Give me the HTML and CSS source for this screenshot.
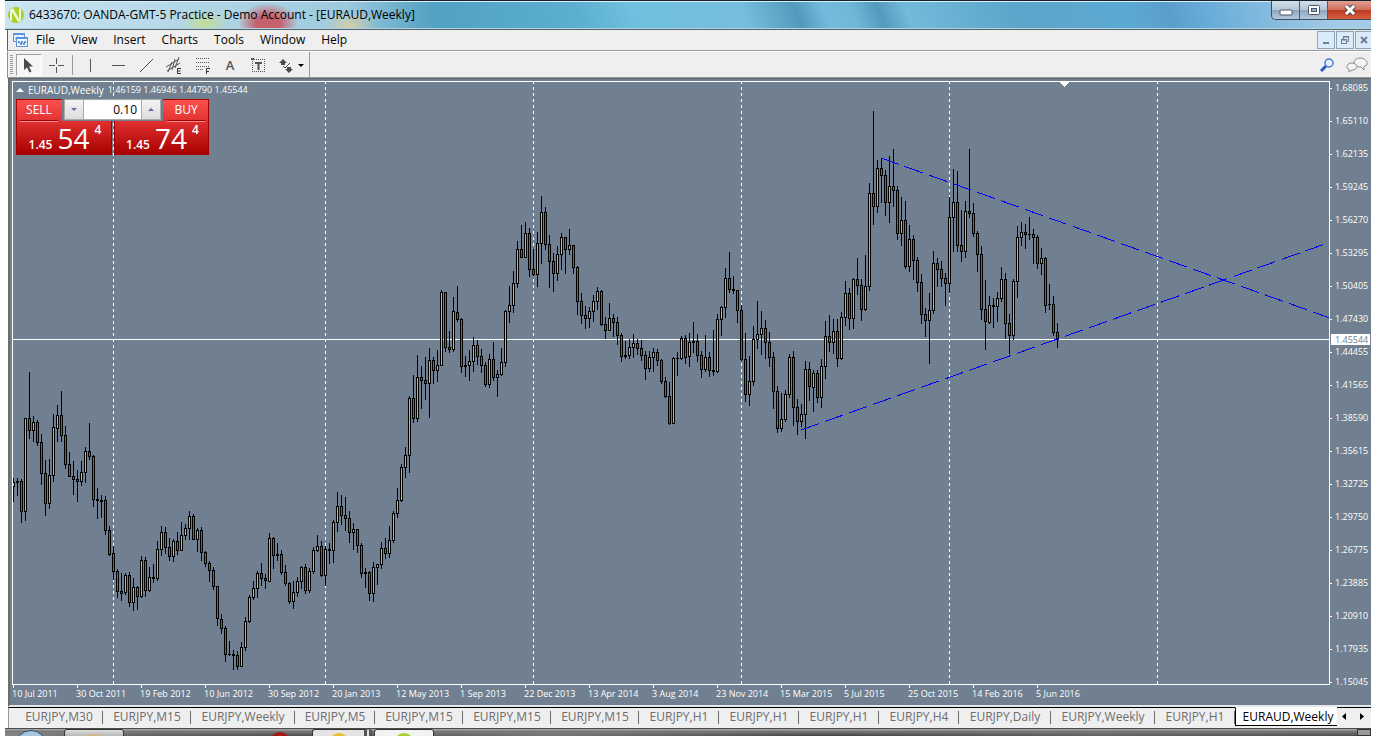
FILE: index.html
```
<!DOCTYPE html>
<html lang="en">
<head>
  <meta charset="UTF-8" />
  <meta name="viewport" content="width=device-width, initial-scale=1.0"/>
  <title>EURAUD,Weekly</title>
  <link rel="stylesheet" href="styles.css">
</head>
<body>

  <div class="window">
    <header class="titlebar">
      <svg class="logo" width="16" height="16" viewBox="0 0 16 16">
        <circle cx="8" cy="8" r="8" fill="#a9cf2d"/>
        <path d="M2 3 L5 1 L11 12 V1 L13 2 V14 L10 15 L4 5 V14 L2 13 Z" fill="#eef6d8"/>
      </svg>
      <h1>6433670: OANDA-GMT-5 Practice - Demo Account - [EURAUD,Weekly]</h1>
      <div class="window-buttons">
        <button aria-label="Minimize"><svg width="14" height="12"><rect x="1" y="6" width="12" height="5" rx="1" fill="#fff" stroke="#4a5565"/></svg></button>
        <button aria-label="Maximize"><svg width="14" height="12"><rect x="1.500" y="1.500" width="11" height="9" rx="1" fill="#fff" stroke="#4a5565"/><rect x="4.500" y="4.500" width="5" height="3" fill="#8fb0cf" stroke="#4a5565"/></svg></button>
        <button class="close" aria-label="Close"><svg width="14" height="12"><path d="M3 2 L11 10 M11 2 L3 10" stroke="#4b4650" stroke-width="5"/><path d="M3 2 L11 10 M11 2 L3 10" stroke="#fff" stroke-width="3"/></svg></button>
      </div>
    </header>

    <nav class="menubar">
      <svg class="chart-icon" width="15" height="14" viewBox="0 0 15 14">
        <rect x="0.500" y="0.500" width="11" height="8" fill="#e6f1fd" stroke="#5b93dd"/>
        <path d="M0 1.500 H12" stroke="#5b93dd"/>
        <path d="M2 6 L4 4 L6 5" stroke="#5b93dd" fill="none"/>
        <rect x="3.500" y="4.500" width="11" height="9" fill="#f2f8ff" stroke="#5b93dd"/>
        <path d="M3 5.500 H15" stroke="#5b93dd"/>
        <path d="M5 10 L6 8 L8 12 L9 8 L11 12 L12 8 L13 10" stroke="#3d7dd0" fill="none"/>
      </svg>
      <a href="#">File</a>
      <a href="#">View</a>
      <a href="#">Insert</a>
      <a href="#">Charts</a>
      <a href="#">Tools</a>
      <a href="#">Window</a>
      <a href="#">Help</a>
      <div class="mdi-buttons">
        <button aria-label="Minimize chart"><svg width="10" height="10"><rect x="2" y="7" width="6" height="2" fill="#6e7f92"/></svg></button>
        <button aria-label="Restore chart"><svg width="10" height="10" fill="none" stroke="#6e7f92"><path d="M3 1.500 H9 M3.500 1 V4 M8.500 1 V6.500 H6"/><path d="M3 2 H9"/><rect x="1.500" y="4.500" width="5" height="4"/><path d="M1 5 H7"/></svg></button>
        <button aria-label="Close chart"><svg width="10" height="10"><path d="M2 2 L8 8 M8 2 L2 8" stroke="#6e7f92" stroke-width="2"/></svg></button>
      </div>
    </nav>

    <div class="toolbar">
      <span class="grip"></span>
      <button class="tool active" aria-label="Cursor"><svg width="20" height="20"><path d="M5 3 V15 L8 12.500 L10.500 17.500 L12.500 16.500 L10 11.500 H14 Z" fill="#4a4a4a"/></svg></button>
      <button class="tool" aria-label="Crosshair"><svg width="20" height="20" stroke="#555"><path d="M3 10.500 H9 M12 10.500 H18 M10.500 3 V9 M10.500 12 V18"/></svg></button>
      <span class="separator"></span>
      <button class="tool" aria-label="Vertical line"><svg width="20" height="20" stroke="#555"><path d="M10.500 4 V17"/></svg></button>
      <button class="tool" aria-label="Horizontal line"><svg width="20" height="20" stroke="#555"><path d="M4 10.500 H17"/></svg></button>
      <button class="tool" aria-label="Trendline"><svg width="20" height="20" stroke="#555"><path d="M4 17 L17 4"/></svg></button>
      <button class="tool" aria-label="Equidistant channel">
        <svg width="20" height="20" stroke="#555" fill="none"><path d="M2 12 L15 4 M3 16 L16 8 M4 17 L8 7 M8 15 L11 4 M11 13 L15 2"/><path d="M17 13.500 H13.500 V18.500 H17 M13 16 H16.500" stroke="#333"/></svg>
      </button>
      <button class="tool" aria-label="Fibonacci retracement">
        <svg width="20" height="20" stroke="#555" fill="none"><path d="M4 3.500 H18 M4 7.500 H18 M4 11.500 H18 M4 14.500 H12" stroke-dasharray="1 1"/><path d="M18 13.500 H14.500 V19 M14 16.500 H17" stroke="#333"/></svg>
      </button>
      <button class="tool letter" aria-label="Text">A</button>
      <button class="tool" aria-label="Text label">
        <svg width="20" height="20" stroke="#555" fill="none"><path d="M4.500 4 V17 M4 4.500 H17 M16.500 4 V17 M4 16.500 H17" stroke-dasharray="1 1"/><path d="M7 8 H14 M10.500 8 V15" stroke-width="2"/><path d="M3 4 H6" stroke-width="2"/></svg>
      </button>
      <button class="tool shapes" aria-label="Arrows">
        <svg width="28" height="20"><path d="M6 4 L10 8 H8 V10 H4 V8 H2 Z M12 18 L8 14 H10 V12 H14 V14 H16 Z" fill="#4a4a4a"/><path d="M6 11 L8 13 L13 8" stroke="#4a4a4a" fill="none"/><path d="M21 9 H27 L24 12 Z" fill="#000"/></svg>
      </button>
      <span class="separator end"></span>
      <div class="toolbar-right">
        <button aria-label="Search"><svg width="14" height="14" fill="none"><path d="M1 13 L6 8" stroke="#2457c5" stroke-width="3"/><circle cx="9" cy="5" r="4" fill="#eaf3ff" stroke="#3f78dc" stroke-width="1.500"/></svg></button>
        <button aria-label="Chat"><svg width="22" height="16" fill="#f4f4f4" stroke="#8a8a8a"><path d="M14 1 C22 1 23 9 18 9.500 L18 13 L15 10 C6 10 6 1 14 1 Z"/><path d="M6 6 C0 6 0 12 3 12.500 V15 L6 13 C13 13 12 6 6 6 Z"/></svg></button>
      </div>
    </div>

    <main class="chart">
      <div class="plot">
        <svg class="candles" id="candles" role="img" aria-label="EURAUD weekly candles"></svg>
        <p class="quote"><span class="up-arrow"></span><span class="symbol">EURAUD,Weekly</span>1.46159 1.46946 1.44790 1.45544</p>
        <form class="one-click">
          <button type="button" class="deal"><span class="side">SELL</span><span class="price">1.45 <b>54</b><sup>4</sup></span></button>
          <button type="button" class="deal buy"><span class="side">BUY</span><span class="price">1.45 <b>74</b><sup>4</sup></span></button>
          <div class="volume">
            <button type="button" aria-label="Less volume"><i class="down"></i></button>
            <input type="text" value="0.10" aria-label="Volume">
            <button type="button" aria-label="More volume"><i class="up"></i></button>
          </div>
        </form>
      </div>
      <div class="price-axis">
        <ul id="prices"></ul>
        <span class="last-price">1.45544</span>
      </div>
      <ol class="time-axis" id="dates"></ol>
    </main>

    <nav class="tabs">
      <a href="#">EURJPY,M30</a>
      <a href="#">EURJPY,M15</a>
      <a href="#" class="long">EURJPY,Weekly</a>
      <a href="#" class="short">EURJPY,M5</a>
      <a href="#">EURJPY,M15</a>
      <a href="#">EURJPY,M15</a>
      <a href="#">EURJPY,M15</a>
      <a href="#" class="short">EURJPY,H1</a>
      <a href="#" class="short">EURJPY,H1</a>
      <a href="#" class="short">EURJPY,H1</a>
      <a href="#" class="short">EURJPY,H4</a>
      <a href="#" class="medium">EURJPY,Daily</a>
      <a href="#" class="long">EURJPY,Weekly</a>
      <a href="#" class="short">EURJPY,H1</a>
      <a href="#" class="long current">EURAUD,Weekly</a>
      <div class="scroll">
        <button aria-label="Scroll left"><svg width="4" height="7"><path d="M4 0 V7 L0 3.500 Z"/></svg></button>
        <button aria-label="Scroll right"><svg width="4" height="7"><path d="M0 0 V7 L4 3.500 Z"/></svg></button>
      </div>
    </nav>

    <footer class="taskbar">
      <span class="start"></span>
      <span class="task"><i class="folder"></i></span>
      <span class="opera"></span>
      <span class="task stacked"><i class="ie"></i></span>
      <span class="task light"><i class="green"></i></span>
      <span class="show-desktop"></span>
    </footer>
  </div>

  <script src="chart.js"></script>
</body>
</html>
```
FILE: styles.css
```
* {
  box-sizing: border-box;
}

body {
  margin: 0;
  padding: 0 11px 0 5px;
  height: 100vh;
  overflow: hidden;
  background: #fff;
  font-family: "Open Sans", "Noto Sans", sans-serif;
  font-size: 12px;
  color: #000;
}

a {
  color: inherit;
  text-decoration: none;
}

button {
  display: flex;
  align-items: center;
  justify-content: center;
  margin: 0;
  padding: 0;
  border: none;
  background: none;
  font-family: inherit;
}

svg {
  display: block;
}

.window {
  display: flex;
  flex-direction: column;
  height: 100%;
}

/* title bar */
.titlebar {
  display: flex;
  align-items: center;
  height: 30px;
  padding-left: 3px;
  border-top: 1px solid #14202e;
  border-bottom: 1px solid #4d6468;
  box-shadow: inset 0 1px #dff0f8, inset 0 -1px #b5d5e2;
  background:
    radial-gradient(ellipse 30px 20px at 263px 22px, rgba(205, 70, 80, 0.8) 40%, transparent),
    radial-gradient(ellipse 24px 14px at 200px 22px, rgba(205, 225, 90, 0.6), transparent),
    radial-gradient(ellipse 26px 14px at 345px 24px, rgba(225, 205, 150, 0.8), transparent),
    linear-gradient(90deg, rgba(215, 235, 245, 0.9), rgba(190, 220, 235, 0.7) 340px, transparent 430px),
    linear-gradient(70deg, #5ba8cc 0, #4f9fc0 30%, #5cafcf 42%, #6fc0de 46%, #76bedd 54%, #529abb 58%, #72bbdc 60%, #6fb8d8 62%, #539abc 64%, #72bada 66%, #5aa5c9 74%, #5ca9d3 82%, #5a9fcb 85%, #69add9 88%, #a4cbe6 97%);
}

.logo {
  margin-right: 5px;
}

.titlebar h1 {
  margin: 0;
  font-size: 12px;
  font-weight: 400;
  line-height: 16px;
  white-space: nowrap;
}

.window-buttons {
  display: flex;
  align-self: flex-start;
  height: 19px;
  margin-left: auto;
  border: 1px solid #3e4c5c;
  border-top: none;
  border-right: none;
  border-radius: 0 0 0 5px;
  overflow: hidden;
}

.window-buttons button {
  width: 28px;
  border-right: 1px solid #4d5c6e;
  background: linear-gradient(#d3dfea 0, #b6c6d8 48%, #8ea4bc 50%, #b2c8dd 100%);
}

.window-buttons .close {
  width: 43px;
  border-right: none;
  background: linear-gradient(#e3a093 0, #d0705c 48%, #bb3a22 50%, #d8603e 100%);
}

/* menu */
.menubar {
  display: flex;
  align-items: center;
  height: 21px;
  margin-left: 2px;
  padding-left: 5px;
  border-left: 1px solid #4d6468;
  border-bottom: 1px solid #9b9b9b;
  background: #efefef;
}

.chart-icon {
  margin-right: 8px;
}

.menubar a {
  margin-right: 16px;
  line-height: 20px;
}

.mdi-buttons {
  display: flex;
  gap: 1px;
  margin-left: auto;
}

.mdi-buttons button {
  width: 18px;
  height: 18px;
  border: 1px solid #8fa4b8;
  background: #dcebf9;
}

.mdi-buttons button:last-child {
  width: 16px;
  border-right: none;
}

/* toolbar */
.toolbar {
  display: flex;
  align-items: center;
  height: 27px;
  margin-left: 2px;
  border-top: 1px solid #fff;
  border-left: 1px solid #8c8c8c;
  border-bottom: 1px solid #999;
  background: #efefef;
}

.grip {
  width: 3px;
  height: 19px;
  margin: 0 3px 0 2px;
  background: repeating-linear-gradient(#9c9c9c 0 1px, #efefef 1px 2px);
}

.tool {
  width: 28px;
  height: 22px;
}

.tool.active {
  width: 26px;
  border: 1px solid #a0a0a0;
  border-right-color: #fff;
  border-bottom-color: #fff;
  background: #f6f6f6;
}

.tool.letter {
  color: #555;
  font-size: 13px;
  font-weight: 600;
}

.tool.shapes {
  width: 37px;
}

.separator {
  width: 1px;
  height: 20px;
  margin: 0 3px 0 2px;
  background: #9a9a9a;
}

.separator.end {
  height: 25px;
  margin: 0;
}

.toolbar-right {
  display: flex;
  gap: 12px;
  margin-left: auto;
  padding-right: 3px;
}

/* chart */
.chart {
  position: relative;
  flex: 1;
  display: grid;
  grid-template-columns: 1fr 41px;
  grid-template-rows: minmax(0, 1fr) 20px;
  min-height: 0;
  margin-left: 3px;
  padding: 2px 0 0 2px;
  border-top: 1px solid #666;
  border-left: 2px solid #706c68;
  border-bottom: 2px solid #e4e8ec;
  background: #708090;
  color: #fff;
  font-size: 9px;
}

.plot {
  position: relative;
  border: 1px solid #fff;
}

.candles {
  position: absolute;
  width: 100%;
  height: 100%;
  shape-rendering: crispEdges;
}

.quote {
  position: relative;
  display: flex;
  align-items: center;
  margin: 2px 0 0 3px;
  line-height: 12px;
  white-space: pre;
}

.quote .symbol {
  margin: 0 4px;
  font-size: 10px;
}

.up-arrow {
  border: 4px solid transparent;
  border-top: none;
  border-bottom-color: #fff;
}

.one-click {
  position: absolute;
  top: 17px;
  left: 3px;
  display: flex;
  gap: 2px;
}

.deal {
  flex-direction: column;
  align-items: stretch;
  justify-content: flex-start;
  width: 96px;
  height: 56px;
  border: 1px solid #a40000;
  background: linear-gradient(#ff5050, #e03030 40%, #a80000);
  color: #fff;
}

.deal.buy {
  width: 95px;
}

.side {
  width: 38px;
  height: 22px;
  margin-left: 3px;
  border-bottom: 1px solid #ff9090;
  box-shadow: 0 -1px #a40000 inset;
  font-size: 12px;
  line-height: 20px;
  text-align: center;
}

.buy .side {
  margin-left: auto;
  margin-right: 3px;
}

.price {
  display: flex;
  align-items: baseline;
  justify-content: center;
  gap: 5px;
  height: 32px;
  padding-left: 2px;
  font-size: 12px;
  font-weight: 600;
  line-height: 32px;
}

.price b {
  font-size: 28px;
  font-weight: 400;
}

.price sup {
  align-self: flex-start;
  font-size: 12px;
  line-height: 16px;
}

.volume {
  position: absolute;
  top: 0;
  left: 46px;
  display: flex;
  width: 101px;
  height: 22px;
  padding: 0 2px 1px;
  background: #708090;
}

.volume button {
  width: 20px;
  border: 1px solid #a9a9a9;
  background: linear-gradient(#f4f4f4, #dcdcdc);
}

.volume input {
  flex: 1;
  min-width: 0;
  padding: 0 4px;
  border: 1px solid #a9a9a9;
  border-width: 1px 0;
  background: #fff;
  font-family: inherit;
  font-size: 12px;
  text-align: right;
}

.volume i {
  border: 3px solid transparent;
}

.volume .down {
  border-bottom: none;
  border-top-color: #5a6ea8;
}

.volume .up {
  border-top: none;
  border-bottom-color: #5a6ea8;
}

.price-axis {
  position: relative;
}

.price-axis ul,
.time-axis {
  margin: 0;
  padding: 0;
  list-style: none;
}

.price-axis li {
  display: flex;
  align-items: center;
  gap: 3px;
  height: 14px;
  margin-bottom: 19px;
  line-height: 14px;
}

.price-axis li::before {
  content: "";
  width: 2px;
  height: 1px;
  background: #fff;
}

/* sits on the axis at the height of the last price line */
.last-price {
  position: absolute;
  top: 253px;
  left: 1px;
  right: 1px;
  padding-left: 4px;
  background: #fff;
  color: #708090;
  line-height: 11px;
}

.time-axis {
  grid-column: 1 / 3;
  display: flex;
}

.time-axis li {
  width: 64px;
  line-height: 12px;
  white-space: nowrap;
}

.time-axis li::before {
  content: "";
  display: block;
  width: 1px;
  height: 3px;
  margin-left: 1px;
  background: #fff;
}

/* chart tabs */
.tabs {
  display: flex;
  height: 21px;
  margin-left: 3px;
  padding-left: 6px;
  border-top: 1px solid #000;
  border-left: 1px solid #999;
  background: #efefef;
  color: #6d6d6d;
}

.tabs a {
  position: relative;
  width: 88px;
  line-height: 18px;
  text-align: center;
  white-space: nowrap;
}

.tabs a::after {
  content: "";
  position: absolute;
  top: 3px;
  right: 0;
  width: 1px;
  height: 13px;
  background: #6d6d6d;
}

.tabs .short {
  width: 80px;
}

.tabs .medium {
  width: 92px;
}

.tabs .long {
  width: 104px;
}

.tabs .current {
  width: 102px;
  height: 19px;
  margin-top: -1px;
  padding-left: 3px;
  border: 1px solid #000;
  border-top-color: #fff;
  border-right: none;
  background: #fff;
  color: #000;
}

.tabs .current::after {
  display: none;
}

.scroll {
  display: flex;
  gap: 14px;
  margin-left: auto;
  padding: 0 7px 4px 0;
}

/* top edge of the taskbar */
.taskbar {
  display: flex;
  height: 8px;
  padding-left: 10px;
  border-top: 1px solid #4a4a4a;
  overflow: hidden;
  background: linear-gradient(#b0b0b0, #7c7c7c 2px, rgba(60, 60, 60, 0.4)), linear-gradient(90deg, #bbb, #777 10%, #555 22%, #999 40%, #444 60%, #777 80%, #555);
}

.start {
  width: 32px;
  height: 32px;
  margin: 1px 17px 0 0;
  border: 1px solid #2b4f72;
  border-radius: 50%;
  background: #a5c8e0;
}

.task {
  display: flex;
  justify-content: center;
  width: 60px;
  height: 20px;
  border: 1px solid #333;
  border-radius: 3px;
  background: linear-gradient(#ddd, #aaa 8px);
}

.task i {
  width: 20px;
  height: 20px;
  margin-top: 3px;
  border-radius: 50%;
}

.task .folder {
  width: 16px;
  margin-top: 5px;
  border-radius: 2px;
  background: #d8b860;
}

.opera {
  width: 20px;
  height: 20px;
  margin: 3px 22px 0 146px;
  border-radius: 50%;
  background: #a01818;
}

.task.stacked {
  margin-right: 2px;
  border-right: 8px double #555;
  background: #e4e4e4;
}

.task .ie {
  border: 3px solid #e8c030;
  background: #3f9fd8;
}

.task.light {
  background: #f2f2f2;
}

.task .green {
  background: #a9cf2d;
}

.show-desktop {
  width: 14px;
  margin-left: auto;
  border: 1px solid #333;
  background: #999;
}
```
FILE: chart.js
```
const svg = document.getElementById("candles");

// one bar per entry: high, open/close top, open/close bottom, low, direction
// u = bull, d = bear, k = no change
const bars = `
478 482 487 502 u|478 481 483 496 k|479 481 512 523 d|418 418 512 521 u|372 418 431 439 d|416 422 431 442 u
420 422 443 446 d|434 442 474 485 d|460 473 504 516 d|459 475 504 509 u|414 427 476 482 u|405 415 429 442 u
391 415 436 442 d|426 435 465 469 d|452 464 477 477 d|461 476 480 495 d|470 479 482 502 d|461 472 482 486 u
447 451 473 483 u|423 451 457 460 d|455 456 500 507 d|488 499 501 519 k|495 500 502 518 k|496 500 531 535 d
526 530 555 556 d|546 553 572 580 d|569 571 592 598 d|573 591 594 601 d|573 575 593 595 u|572 575 603 607 d
578 587 603 611 u|586 587 597 610 d|556 560 597 598 u|557 560 591 597 d|567 577 591 592 u|564 577 579 583 k
541 549 579 581 u|526 532 550 556 u|527 532 548 554 d|538 547 557 561 d|539 541 557 562 u|532 541 551 555 d
522 535 551 551 u|524 528 536 540 u|511 516 529 540 u|514 516 540 540 d|528 530 540 552 u|527 530 553 561 d
551 552 564 567 d|561 563 571 582 d|567 570 587 590 d|586 586 619 626 d|614 619 629 634 d|626 628 655 662 d
641 654 655 656 k|650 654 656 670 k|651 655 667 670 d|642 647 667 667 u|617 621 648 651 u|595 597 622 623 u
581 588 598 600 u|571 573 589 598 u|563 573 579 586 d|574 578 581 589 d|533 538 582 582 u|537 538 556 569 d
543 554 556 561 k|550 554 573 575 d|565 572 584 586 d|582 583 602 604 d|581 592 602 609 u|577 581 593 597 u
566 567 582 589 u|564 567 591 594 d|568 571 591 593 u|547 550 572 574 u|535 546 551 552 u|541 546 576 577 d
546 549 576 586 u|543 549 551 564 k|520 522 551 563 u|492 506 523 532 u|495 506 516 525 d|497 515 519 531 d
511 518 533 543 d|523 529 533 550 u|529 529 546 553 d|543 545 574 578 d|568 572 574 588 k|571 572 594 601 d
562 567 594 602 u|564 564 568 585 u|542 548 565 569 u|538 548 554 559 d|526 540 554 558 u|511 513 541 543 u
488 500 514 518 u|464 467 501 502 u|447 455 468 478 u|396 398 456 473 u|375 398 419 423 d|355 377 419 422 u
366 377 381 409 d|357 380 384 400 d|348 360 384 418 u|357 360 371 384 d|350 365 371 382 u|290 292 366 366 u
292 292 348 352 d|331 347 350 353 d|297 311 350 352 u|286 312 320 322 d|318 319 367 373 d|356 365 367 377 k
350 361 366 381 u|337 345 362 372 u|340 345 357 365 d|349 356 366 373 d|362 365 385 387 d|354 359 385 388 u
342 359 378 381 d|370 374 378 397 u|348 362 375 376 u|310 311 363 367 u|286 305 312 323 u|271 283 306 313 u
241 249 284 288 u|225 249 258 258 d|222 233 258 258 u|228 233 270 277 d|249 269 275 276 d|232 243 275 287 u
196 212 244 264 u|207 212 245 250 d|235 244 262 288 d|253 261 274 292 d|246 254 274 281 u|233 237 255 270 u
237 237 250 274 d|229 245 250 255 u|245 245 268 274 d|266 267 302 315 d|293 301 316 324 d|306 315 319 329 d
307 311 319 328 u|295 301 312 322 u|287 291 302 310 u|290 291 325 326 d|317 324 331 339 d|303 318 331 331 u
314 318 323 337 d|317 322 336 345 d|333 335 357 362 d|341 355 357 359 k|339 347 356 359 u|334 343 348 358 u
339 343 349 355 d|340 348 356 361 d|351 355 369 380 d|351 357 369 372 u|348 352 358 372 u|349 352 361 366 d
359 360 382 384 d|377 381 397 398 d|382 396 424 425 d|357 358 424 424 u|352 358 359 376 k|336 338 359 360 u
335 338 358 364 d|333 342 357 367 u|322 341 343 353 k|334 341 356 362 d|351 355 370 378 d|335 357 370 372 u
352 357 371 377 d|330 370 372 376 k|314 319 372 373 u|306 307 320 336 u|268 278 308 318 u|252 278 290 293 d
276 289 291 294 k|290 290 311 323 d|305 310 360 361 d|333 359 395 402 d|356 381 395 406 u|326 339 382 386 u
301 334 340 349 u|311 328 335 355 u|320 328 343 359 d|332 342 358 367 d|352 357 392 409 d|386 391 429 433 d
393 419 429 432 u|390 394 420 422 u|354 357 395 398 u|351 357 408 426 d|399 407 422 435 d|404 414 422 427 u
361 369 415 439 u|362 369 387 401 d|370 373 388 412 u|370 373 398 403 d|359 366 398 408 u|321 336 367 379 u
315 336 343 352 d|319 331 343 354 u|319 331 359 367 d|312 317 359 360 u|281 293 318 326 u|288 293 319 330 d
278 279 319 329 u|258 279 286 295 d|279 285 310 321 d|255 286 310 311 u|183 193 287 291 u|111 193 207 225 d
160 168 207 213 u|158 168 176 203 d|170 175 203 216 d|156 186 203 223 u|149 186 191 207 d|186 190 234 240 d
197 220 234 246 u|201 220 267 269 d|225 239 267 272 u|235 239 261 280 d|257 260 283 292 d|274 282 315 324 d
308 314 321 337 d|293 310 321 364 u|251 263 311 314 u|258 263 270 287 d|261 269 279 287 d|273 278 284 306 d
197 217 284 293 u|169 202 218 252 u|171 202 246 252 d|210 245 252 262 d|201 211 252 258 u|149 211 214 218 d
203 213 234 237 d|231 233 255 272 d|246 254 310 320 d|280 309 322 350 d|296 305 323 324 u|298 305 307 328 k
292 298 307 322 u|267 279 299 302 u|273 279 324 339 d|314 323 336 354 d|279 281 336 340 u|226 237 282 298 u
222 232 238 246 u|224 232 235 249 d|217 234 235 240 k|229 234 238 264 d|235 237 264 269 d|248 258 264 275 u
257 258 306 313 d|284 304 305 310 k|296 304 333 336 d|323 332 340 348 d
`.trim().split(/[|\n]/);

const rect = (x, y, w, h, fill) => `<rect x="${x}" y="${y}" width="${w}" height="${h}" fill="${fill}"/>`;
let out = "";

// year separators
for (const x of [113, 325, 533, 741, 949, 1157]) {
  out += `<line x1="${x}.5" x2="${x}.5" y1="81" y2="2000" stroke="#fff" stroke-dasharray="3 3"/>`;
}

// last price
out += `<rect x="13" y="339" width="100%" height="1" fill="#fff"/>`;

bars.forEach((bar, i) => {
  const [high, top, bottom, low, type] = bar.split(" ");
  const x = 13 + i * 4;
  out += rect(x, high, 1, low - high, "#000");
  out += rect(x - 1, top, 3, bottom - top, "#000");
  if (type !== "k" && bottom - top > 2) {
    out += rect(x, +top + 1, 1, bottom - top - 2, type === "u" ? "#20f0f0" : "#e010d8");
  }
});

// trend lines
out += `<g stroke="#0000ff" stroke-dasharray="19 6 19 7">
  <line x1="881" y1="158" x2="1330" y2="318"/>
  <line x1="801" y1="430" x2="1325" y2="244"/>
</g>`;

// chart shift marker
out += `<path d="M1060 82 H1069 L1064.5 87 Z" fill="#fff"/>`;

svg.innerHTML = `<g transform="translate(-13 -82)">${out}</g>`;

const prices = ["1.68085", "1.65110", "1.62135", "1.59245", "1.56270", "1.53295", "1.50405", "1.47430", "1.44455", "1.41565", "1.38590", "1.35615", "1.32725", "1.29750", "1.26775", "1.23885", "1.20910", "1.17935", "1.15045"];
document.getElementById("prices").innerHTML = prices.map(p => `<li>${p}</li>`).join("");

const dates = ["10 Jul 2011", "30 Oct 2011", "19 Feb 2012", "10 Jun 2012", "30 Sep 2012", "20 Jan 2013", "12 May 2013", "1 Sep 2013", "22 Dec 2013", "13 Apr 2014", "3 Aug 2014", "23 Nov 2014", "15 Mar 2015", "5 Jul 2015", "25 Oct 2015", "14 Feb 2016", "5 Jun 2016"];
document.getElementById("dates").innerHTML = dates.map(d => `<li>${d}</li>`).join("");
```
